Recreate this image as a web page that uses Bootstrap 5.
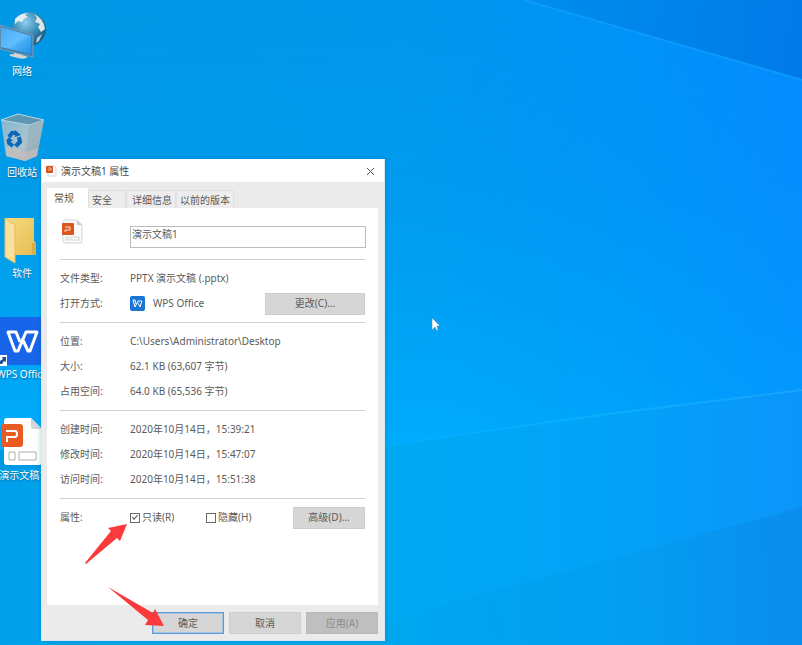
<!DOCTYPE html>
<html lang="zh-CN">
<head>
<meta charset="utf-8">
<meta name="viewport" content="width=device-width, initial-scale=1">
<title>演示文稿1 属性</title>
<link href="https://cdn.jsdelivr.net/npm/bootstrap@5.3.0/dist/css/bootstrap.min.css" rel="stylesheet">
<style>
  body { font-family: "Noto Sans", "Noto Sans CJK SC", sans-serif; font-size: 10px; line-height: 15px; color: #5a5a5a; background: #009fee; }
  button, input { font: inherit; color: inherit; }
  .wallpaper { position: absolute; inset: 0; width: 100%; height: 100%; }
  .shortcuts { position: absolute; left: 0; top: 10px; width: 44px; }
  .shortcut { height: 101px; color: #fff; white-space: nowrap; text-decoration: none; text-shadow: 0 1px 2px #0006; }
  .shortcut svg { width: 48px; height: 54px; flex: none; }
  .props { position: absolute; left: 41px; top: 159px; width: 344px; background: #ebebeb; border: 1px solid #d5eaf5; border-top-color: #f4fbff; box-shadow: 0 0 5px #0057904d; }
  .titlebar { height: 22px; background: #fff; padding: 0 4px; color: #484848; }
  .close-btn { border: 0; background: none; padding: 0 5px; line-height: 0; }
  .body-area { padding: 6px 6px 0 5px; }
  .tab-btn { border: 1px solid #e0e0e0; border-bottom: 0; background: #ededed; height: 18px; padding: 1px 3px 0; line-height: 15px; }
  .tab-btn.active { background: #fff; border-color: #fff; height: 20px; padding: 0 13px 0 6px; }
  .tab-btn.roomy { padding-right: 13px; }
  .tab-btn.inset { padding-left: 5px; }
  .sheet { background: #fff; padding: 11px 13px 75px; }
  .name-row { padding-bottom: 11px; }
  .name-box { height: 22px; line-height: 13px; border: 1px solid #bcbcbc; padding: 0 1px 7px; border-radius: 0; min-width: 0; margin-right: -1px; }
  .group { border-top: 1px solid #cfcfcf; padding: 6px 0; margin: 0; }
  .field { height: 25px; }
  .field dt, .field-label { width: 70px; flex: none; font-weight: 400; }
  .field dd { margin: 0; }
  .btn-face { border: 1px solid #cdcdcd; background: #d6d6d6; height: 22px; width: 72px; padding: 0; }
  .btn-face.wide { width: 100px; }
  .btn-face.default { border: 1px solid #5d9bd8; box-shadow: inset 0 0 0 1px #a3c3e2; }
  .btn-face:disabled { background: #bfbfbf; border-color: #b9b9b9; color: #8c8c8c; }
  .tick { appearance: none; width: 10px; height: 10px; border: 1px solid #6a6a6a; margin: 0; background: #fff; display: grid; place-items: center; }
  .tick:checked::after { content: ""; width: 6px; height: 3px; border: solid #555; border-width: 0 0 1px 1px; transform: rotate(-45deg); margin-bottom: 2px; }
  .tick-pair { width: 76px; gap: 2px; }
  .footer-bar { padding: 7px 0 6px; gap: 5px; }
  .overlay-art { position: absolute; pointer-events: none; }
  .pointer-up { left: 84px; top: 522px; }
  .pointer-down { left: 106px; top: 585px; }
  .cursor { left: 431px; top: 317px; }
</style>
<script src="https://cdn.jsdelivr.net/npm/bootstrap@5.3.0/dist/js/bootstrap.bundle.min.js"></script>
</head>
<body class="position-relative vh-100 overflow-hidden">

<svg class="wallpaper" viewBox="0 0 802 645" preserveAspectRatio="none" aria-hidden="true">
  <defs>
    <linearGradient id="sky" x1="0" y1="0" x2="1" y2="0"><stop offset="0" stop-color="#0098e4"/><stop offset=".5" stop-color="#0097ec"/><stop offset=".8" stop-color="#0092f8"/><stop offset="1" stop-color="#068bff"/></linearGradient>
    <linearGradient id="glow" x1="0" y1="0" x2="0" y2="1"><stop offset="0" stop-color="#00aaff" stop-opacity="0"/><stop offset=".4" stop-color="#00aaf8" stop-opacity=".2"/><stop offset="1" stop-color="#00aeff" stop-opacity=".9"/></linearGradient>
    <linearGradient id="corner" gradientUnits="userSpaceOnUse" x1="520" y1="0" x2="802" y2="30"><stop offset="0" stop-color="#008fec"/><stop offset="1" stop-color="#007ae8"/></linearGradient>
    <linearGradient id="floor" x1="0" y1="0" x2="1" y2="0"><stop offset="0" stop-color="#00a0ea"/><stop offset=".5" stop-color="#00a9f4"/><stop offset=".75" stop-color="#02a3f8"/><stop offset="1" stop-color="#0b95fa"/></linearGradient>
    <linearGradient id="floor2" gradientUnits="userSpaceOnUse" x1="380" y1="620" x2="802" y2="600"><stop offset="0" stop-color="#00a7ee"/><stop offset=".6" stop-color="#039df0"/><stop offset="1" stop-color="#0a8aea"/></linearGradient>
    <linearGradient id="ray" gradientUnits="userSpaceOnUse" x1="380" y1="0" x2="802" y2="0"><stop offset="0" stop-color="#00aefc"/><stop offset=".5" stop-color="#08b0ff"/><stop offset="1" stop-color="#18a4ff"/></linearGradient>
    <linearGradient id="fade" gradientUnits="userSpaceOnUse" x1="450" y1="0" x2="802" y2="0"><stop offset="0" stop-color="#fff"/><stop offset="1" stop-color="#777"/></linearGradient>
    <mask id="left-strong"><rect width="802" height="645" fill="url(#fade)"/></mask>
  </defs>
  <rect width="802" height="645" fill="url(#sky)"/>
  <rect width="802" height="450" fill="url(#glow)" mask="url(#left-strong)"/>
  <path d="M524 0H802V80Z" fill="url(#corner)"/>
  <path d="M524 0L802 80" stroke="#0d9aff" stroke-width="2"/>
  <path d="M0 470L380 446L600 415L802 390V645H0Z" fill="url(#floor)"/>
  <path d="M380 446L600 415L802 390" fill="none" stroke="url(#ray)" stroke-width="2"/>
  <path d="M0 645L380 622L600 562L802 507V645Z" fill="url(#floor2)" opacity=".8"/>
</svg>

<nav class="shortcuts" aria-label="桌面">
  <a class="shortcut d-flex flex-column align-items-center" href="#">
    <svg viewBox="0 0 48 54" aria-hidden="true">
      <defs>
        <radialGradient id="globe" cx=".4" cy=".3" r=".8"><stop offset="0" stop-color="#8fd0ef"/><stop offset=".5" stop-color="#3688b4"/><stop offset="1" stop-color="#174c70"/></radialGradient>
        <linearGradient id="screen" x1="0" y1="0" x2="1" y2="1"><stop offset="0" stop-color="#2d9df0"/><stop offset=".5" stop-color="#56baff"/><stop offset="1" stop-color="#218de4"/></linearGradient>
      </defs>
      <circle cx="31" cy="19" r="17" fill="url(#globe)"/>
      <path d="M17 9Q22 3 30 3L27 5L30 7L26 9L24 12L20 11L17 14Z" fill="#e2eef2"/>
      <path d="M36 4Q46 9 47 19L43 22L40 17L42 14L37 12L39 8Z" fill="#d8e6e8"/>
      <path d="M39 28L44 24L41 31L38 33Z" fill="#b8d0d8"/>
      <path d="M16 40L22 42L24 45L30 47Q26 50 20 48L12 46Q10 44 16 44Z" fill="#d8d4d4"/>
      <path d="M2 15L35 25V47L2 39Z" fill="#3c80b4" stroke="#7f9cae"/>
      <path d="M3 17L33 26V44L3 37Z" fill="url(#screen)"/>
      <path d="M3 17L33 26L8 38L3 37Z" fill="#7bcaff" opacity=".3"/>
    </svg><span>网络</span>
  </a>
  <a class="shortcut d-flex flex-column align-items-center" href="#">
    <svg viewBox="0 0 48 54" aria-hidden="true">
      <defs><linearGradient id="bin" x1="0" y1="0" x2="1" y2="1"><stop offset="0" stop-color="#7fb6d0"/><stop offset=".6" stop-color="#acc4ce"/><stop offset="1" stop-color="#9aa9ae"/></linearGradient></defs>
      <path d="M3 9L20 3L46 9L39 45L27 50L8 45Z" fill="url(#bin)"/>
      <path d="M3 9L20 3L46 9L31 14Z" fill="#5f97b0" stroke="#b9d6e2"/>
      <path d="M31 14L46 9L39 45L27 50Z" fill="#8ea9b5" opacity=".5"/>
      <path d="M8 36L28 41L40 37L39 45L27 50L8 45Z" fill="#c9beba" opacity=".7"/>
      <g fill="none" stroke="#0b67b8" stroke-width="4"><path d="M11 26L14 22L18 22"/><path d="M21 26L22 31L19 34"/><path d="M15 35L11 32L11 29"/></g>
      <path d="M17 19L23 24L17 26ZM20 30V37L16 34ZM8 30L11 26L15 30Z" fill="#0b67b8"/>
    </svg><span>回收站</span>
  </a>
  <a class="shortcut d-flex flex-column align-items-center" href="#">
    <svg viewBox="0 0 48 54" aria-hidden="true">
      <defs><linearGradient id="folder" x1="0" y1="0" x2="1" y2="1"><stop offset="0" stop-color="#f4da83"/><stop offset="1" stop-color="#e8bd50"/></linearGradient></defs>
      <path d="M7 6H36V29L38 31V43H16Z" fill="url(#folder)"/>
      <path d="M7 6L17 13V51L7 45Z" fill="#fae09a" stroke="#e5bd5c"/>
      <path d="M34 31H38V43H34Z" fill="#d9ad48"/>
    </svg><span>软件</span>
  </a>
  <a class="shortcut d-flex flex-column align-items-center" href="#">
    <svg viewBox="0 0 48 54" aria-hidden="true">
      <rect x="1" y="4" width="47" height="48" rx="3" fill="#1865ea"/>
      <path d="M22 29L18 19H10L17 38L20 38L28 19H39L32 38H30L24 25" fill="none" stroke="#fff" stroke-width="3" stroke-linejoin="round"/>
      <rect x="0" y="42" width="9" height="11" fill="#fff"/>
      <path d="M2 51V48L5 46L4 44H8V49L6 48L4 51Z" fill="#165093"/>
    </svg><span>WPS Office</span>
  </a>
  <a class="shortcut d-flex flex-column align-items-center" href="#">
    <svg viewBox="0 0 48 54" aria-hidden="true">
      <path d="M9 4H33L44 15V48Q44 51 41 51H9Q6 51 6 48V7Q6 4 9 4Z" fill="#fff"/>
      <path d="M33 4L44 15H35Q33 15 33 12Z" fill="#d2d6da"/>
      <rect x="3" y="10" width="22" height="23" rx="3" fill="#e85b21"/>
      <path d="M8 17H17Q19 17 19 20Q19 23 17 23H9V28" fill="none" stroke="#fff" stroke-width="2"/>
      <path d="M11 38H17V46H11ZM21 38H38V46H21Z" fill="none" stroke="#adadad"/>
    </svg><span>演示文稿1</span>
  </a>
</nav>

<main class="props" role="dialog" aria-labelledby="dialog-title">
  <header class="titlebar d-flex align-items-center">
    <svg class="me-1" width="11" height="12" viewBox="0 0 11 12" aria-hidden="true"><path d="M2 1H8L10 3V11H2Z" fill="#fff" stroke="#d5d5d5"/><rect x="0" y="1" width="7" height="7" rx="1" fill="#d9531f"/><path d="M2 3H5V5H2" fill="none" stroke="#fbd8c8" stroke-opacity=".7"/></svg>
    <span id="dialog-title">演示文稿1 属性</span>
    <button class="close-btn ms-auto" type="button" aria-label="关闭"><svg width="9" height="9" viewBox="0 0 9 9"><path d="M1 1L8 8M8 1L1 8" stroke="#555"/></svg></button>
  </header>
  <div class="body-area">
    <div class="d-flex align-items-end" role="tablist">
      <button class="tab-btn active" type="button" role="tab" aria-selected="true">常规</button>
      <button class="tab-btn roomy" type="button" role="tab">安全</button>
      <button class="tab-btn inset" type="button" role="tab">详细信息</button>
      <button class="tab-btn" type="button" role="tab">以前的版本</button>
    </div>
    <form class="sheet" id="props-form">
      <div class="name-row d-flex align-items-end">
        <div class="field-label"><svg class="d-block mb-1" width="24" height="25" viewBox="0 0 24 25" aria-hidden="true"><path d="M5 1H17L22 6V22Q22 24 20 24H5Q3 24 3 22V3Q3 1 5 1Z" fill="#fafafa" stroke="#d5d5d8"/><path d="M17 1V6H22Z" fill="#c9c9cf"/><rect x="2" y="4" width="12" height="12" rx="1" fill="#d9571f"/><path d="M5 8H10V11H5V13" fill="none" stroke="#fbe3d7"/><path d="M6 18H9V21H6ZM11 18H19V21H11Z" fill="#fff" stroke="#d3d3d3"/></svg></div>
        <input class="name-box flex-grow-1" type="text" value="演示文稿1" aria-label="文件名">
      </div>
      <dl class="group">
        <div class="field d-flex align-items-center"><dt>文件类型:</dt><dd>PPTX 演示文稿 (.pptx)</dd></div>
        <div class="field d-flex align-items-center"><dt>打开方式:</dt>
          <dd class="d-flex align-items-center flex-grow-1"><svg class="me-2" width="15" height="15" viewBox="0 0 15 15" aria-hidden="true"><rect width="15" height="15" rx="2" fill="#1b75d4"/><path d="M6 8L5 4H3L5 11L8 5H12L10 11L8 7" fill="none" stroke="#fff"/></svg>WPS Office
            <button class="btn-face wide ms-auto" type="button">更改(C)...</button></dd></div>
      </dl>
      <dl class="group">
        <div class="field d-flex align-items-center"><dt>位置:</dt><dd>C:\Users\Administrator\Desktop</dd></div>
        <div class="field d-flex align-items-center"><dt>大小:</dt><dd>62.1 KB (63,607 字节)</dd></div>
        <div class="field d-flex align-items-center"><dt>占用空间:</dt><dd>64.0 KB (65,536 字节)</dd></div>
      </dl>
      <dl class="group">
        <div class="field d-flex align-items-center"><dt>创建时间:</dt><dd>2020年10月14日，15:39:21</dd></div>
        <div class="field d-flex align-items-center"><dt>修改时间:</dt><dd>2020年10月14日，15:47:07</dd></div>
        <div class="field d-flex align-items-center"><dt>访问时间:</dt><dd>2020年10月14日，15:51:38</dd></div>
      </dl>
      <div class="group pb-0">
        <div class="field d-flex align-items-center">
          <span class="field-label">属性:</span>
          <div class="tick-pair d-flex align-items-center"><input class="tick" type="checkbox" id="readonly-box" checked><label for="readonly-box">只读(R)</label></div>
          <div class="tick-pair d-flex align-items-center"><input class="tick" type="checkbox" id="hidden-box"><label for="hidden-box">隐藏(H)</label></div>
          <button class="btn-face ms-auto" type="button">高级(D)...</button>
        </div>
      </div>
    </form>
    <div class="footer-bar d-flex justify-content-end">
      <button class="btn-face default" type="submit" form="props-form">确定</button>
      <button class="btn-face" type="button">取消</button>
      <button class="btn-face" type="button" disabled>应用(A)</button>
    </div>
  </div>
</main>

<svg class="overlay-art pointer-up" width="44" height="43" viewBox="0 0 44 43" aria-hidden="true"><path d="M1 41L27 9L24 6L43 2L36 19L33 16L2 42Z" fill="#fb3a3c"/></svg>
<svg class="overlay-art pointer-down" width="60" height="43" viewBox="0 0 60 43" aria-hidden="true"><path d="M2 2L47 28L49 24L58 41L39 40L42 35Z" fill="#fb3a3c"/></svg>
<svg class="overlay-art cursor" width="10" height="15" viewBox="0 0 10 15" aria-hidden="true"><path d="M1 1V13L4 10L6 14L7 13L6 9H9Z" fill="#fff" stroke="#4b88b5" stroke-width=".5"/></svg>
</body>
</html>
